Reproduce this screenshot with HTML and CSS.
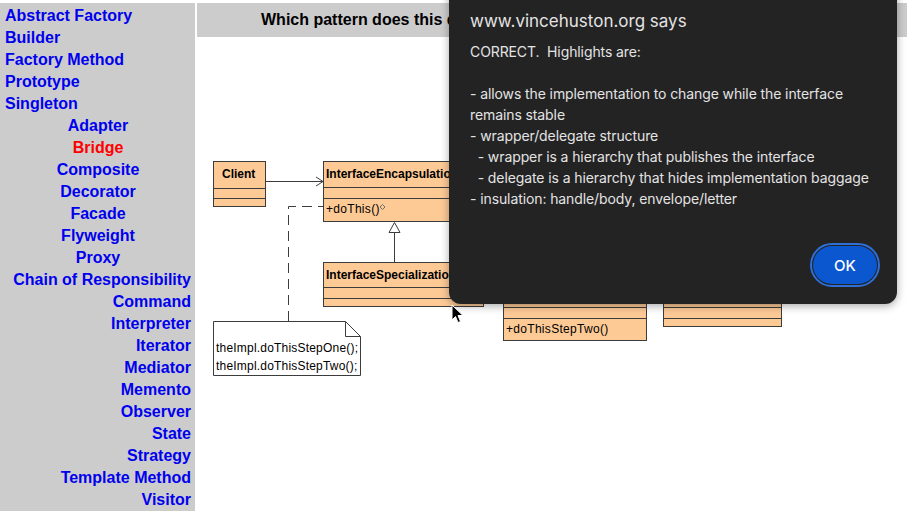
FILE: index.html
```html
<!DOCTYPE html>
<html lang="en">
<head>
  <meta charset="UTF-8">
  <title>Bridge - Design Patterns Quiz</title>
  <link rel="stylesheet" href="styles.css">
</head>
<body>
  <div class="page">
    <nav class="patterns">
      <ul class="group creational">
        <li><a href="#">Abstract Factory</a></li>
        <li><a href="#">Builder</a></li>
        <li><a href="#">Factory Method</a></li>
        <li><a href="#">Prototype</a></li>
        <li><a href="#">Singleton</a></li>
      </ul>
      <ul class="group structural">
        <li><a href="#">Adapter</a></li>
        <li><a href="#" class="current">Bridge</a></li>
        <li><a href="#">Composite</a></li>
        <li><a href="#">Decorator</a></li>
        <li><a href="#">Facade</a></li>
        <li><a href="#">Flyweight</a></li>
        <li><a href="#">Proxy</a></li>
      </ul>
      <ul class="group behavioral">
        <li><a href="#">Chain of Responsibility</a></li>
        <li><a href="#">Command</a></li>
        <li><a href="#">Interpreter</a></li>
        <li><a href="#">Iterator</a></li>
        <li><a href="#">Mediator</a></li>
        <li><a href="#">Memento</a></li>
        <li><a href="#">Observer</a></li>
        <li><a href="#">State</a></li>
        <li><a href="#">Strategy</a></li>
        <li><a href="#">Template Method</a></li>
        <li><a href="#">Visitor</a></li>
      </ul>
    </nav>

    <main class="content">
      <div class="question">Which pattern does this diagram represent?</div>

      <!-- UML class diagram, drawn in page coordinates -->
      <svg class="diagram" viewBox="197 37 710 474" width="710" height="474">
        <g class="uml-box">
          <rect x="213.5" y="161.5" width="52" height="45"/>
          <line x1="213.5" y1="188.5" x2="265.5" y2="188.5"/>
          <line x1="213.5" y1="198.5" x2="265.5" y2="198.5"/>
        </g>
        <text class="cls" x="222" y="178">Client</text>

        <g class="uml-box">
          <rect x="323.5" y="161.5" width="160" height="60"/>
          <line x1="323.5" y1="187.5" x2="483.5" y2="187.5"/>
          <line x1="323.5" y1="198.5" x2="483.5" y2="198.5"/>
        </g>
        <text class="cls" x="326" y="178">InterfaceEncapsulation</text>
        <text class="op" x="326" y="213">+doThis()</text>
        <path class="tiny" d="M382.5 204.5 L385 207 L382.5 209.5 L380 207 Z"/>

        <g class="uml-box">
          <rect x="323.5" y="262.5" width="160" height="44"/>
          <line x1="323.5" y1="287.5" x2="483.5" y2="287.5"/>
          <line x1="323.5" y1="298.5" x2="483.5" y2="298.5"/>
        </g>
        <text class="cls" x="326" y="279">InterfaceSpecialization</text>

        <g class="uml-box">
          <rect x="503.5" y="260.5" width="143" height="80"/>
          <line x1="503.5" y1="307.5" x2="646.5" y2="307.5"/>
          <line x1="503.5" y1="318.5" x2="646.5" y2="318.5"/>
        </g>
        <text class="op" x="506" y="333">+doThisStepTwo()</text>

        <g class="uml-box">
          <rect x="663.5" y="260.5" width="118" height="66"/>
          <line x1="663.5" y1="307.5" x2="781.5" y2="307.5"/>
          <line x1="663.5" y1="318.5" x2="781.5" y2="318.5"/>
        </g>

        <!-- association -->
        <line class="edge" x1="265.5" y1="181.5" x2="323" y2="181.5"/>
        <path class="edge" d="M316 177 L323 181.5 L316 186"/>

        <!-- generalization -->
        <line class="edge" x1="394.5" y1="232" x2="394.5" y2="262"/>
        <path class="edge hollow" d="M394.5 222.5 L400 232.5 L389 232.5 Z"/>

        <!-- note link -->
        <path class="dashed" d="M288.5 321 V206.5 H323"/>

        <!-- note -->
        <path class="note" d="M213.5 321.5 H345.5 L360.5 336.5 V375.5 H213.5 Z"/>
        <path class="edge" d="M345.5 321.5 V336.5 H360.5"/>
        <text class="op note-text" x="216" y="352">theImpl.doThisStepOne();</text>
        <text class="op note-text" x="216" y="370">theImpl.doThisStepTwo();</text>
      </svg>
    </main>
  </div>

  <div class="alert">
    <div class="alert-title">www.vincehuston.org says</div>
    <div class="alert-message">CORRECT.&nbsp; Highlights are:

- allows the implementation to change while the interface remains stable
- wrapper/delegate structure
  - wrapper is a hierarchy that publishes the interface
  - delegate is a hierarchy that hides implementation baggage
- insulation: handle/body, envelope/letter</div>
    <div class="alert-buttons">
      <button class="ok">OK</button>
    </div>
  </div>

  <svg class="cursor" width="14" height="20" viewBox="0 0 14 20">
    <path d="M1 1 V16 L4.5 12.5 L7 18.5 L9.5 17.5 L7 11.5 H12 Z" fill="#000" stroke="#fff" stroke-width="1"/>
  </svg>
</body>
</html>
```

FILE: styles.css
```css
body { margin: 0; background: #fff; font-family: "Liberation Sans", Arial, sans-serif; overflow: hidden; }

.page { display: flex; padding-top: 3px; min-height: 508px; }

.patterns { width: 195px; flex-shrink: 0; background: #ccc; padding: 2px 4px 0 5px; box-sizing: border-box; }
.group { list-style: none; margin: 0; padding: 0; }
.group li { font-size: 16px; font-weight: bold; line-height: 22px; white-space: nowrap; }
.group a { color: #0000ee; text-decoration: none; }
.group a.current { color: #ff0000; }
.creational { text-align: left; }
.structural { text-align: center; }
.behavioral { text-align: right; }

.content { flex: 1; margin: 0 20px 0 2px; }
.question { background: #ccc; height: 34px; line-height: 34px; font-size: 16px; font-weight: bold; color: #000; padding-left: 64px; white-space: nowrap; overflow: hidden; }
.diagram { display: block; }

.uml-box rect { fill: #fdca96; stroke: #3c3c3c; stroke-width: 1; }
.uml-box line { stroke: #3c3c3c; stroke-width: 1; }
.cls { font-family: "Liberation Sans", Arial, sans-serif; font-size: 12px; font-weight: bold; fill: #000; }
.op { font-family: "Liberation Sans", Arial, sans-serif; font-size: 12px; fill: #000; letter-spacing: 0.3px; }
.note-text { letter-spacing: 0.2px; }
.tiny { fill: none; stroke: #555; stroke-width: 0.8; }
.edge { fill: none; stroke: #3c3c3c; stroke-width: 1; }
.edge.hollow { fill: #fff; }
.dashed { fill: none; stroke: #3c3c3c; stroke-width: 1; stroke-dasharray: 10 6; }
.note { fill: #fff; stroke: #3c3c3c; stroke-width: 1; }

.alert { position: absolute; left: 449px; top: -20px; width: 448px; height: 324px; box-sizing: border-box; background: #232323; border-radius: 12px; box-shadow: 0 2px 8px rgba(0, 0, 0, 0.35); padding: 29px 17px 17px 21px; font-family: Inter, Roboto, sans-serif; color: #e3e3e3; display: flex; flex-direction: column; }
.alert-title { font-size: 17px; line-height: 24px; }
.alert-message { margin-top: 8px; font-size: 14px; line-height: 21px; letter-spacing: -0.1px; white-space: pre-wrap; flex: 1; }
.alert-buttons { display: flex; justify-content: flex-end; }
.ok { width: 64px; height: 38px; margin: 3px; border: none; border-radius: 19px; background: #0b57d0; color: #fff; font-family: Inter, Roboto, sans-serif; font-size: 15px; font-weight: 500; outline: 2px solid #2f6fd8; outline-offset: 1px; }

.cursor { position: absolute; left: 451px; top: 304px; }
```
